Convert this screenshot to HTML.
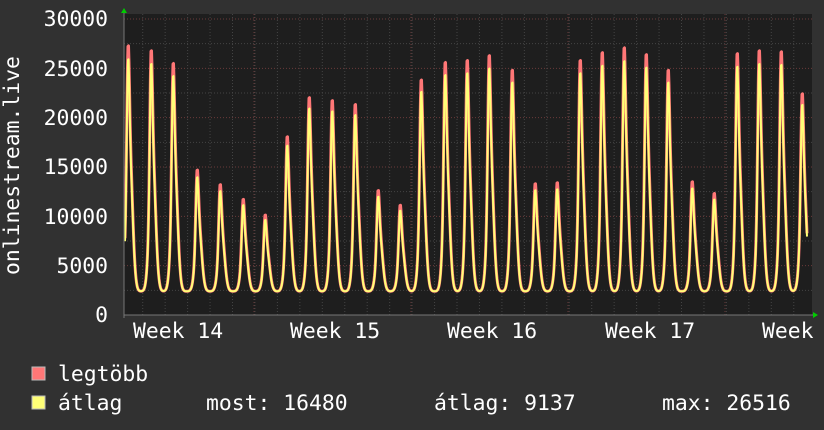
<!DOCTYPE html>
<html><head><meta charset="utf-8"><style>
html,body{margin:0;padding:0;background:#333;}
svg{display:block}
text{font-family:"DejaVu Sans Mono","Liberation Mono",monospace;fill:#fff;font-size:21.4px}
</style></head><body>
<svg id="s" width="824" height="430" xmlns="http://www.w3.org/2000/svg">
<rect width="824" height="430" fill="#313131"/>
<rect x="124" y="14" width="688" height="301" fill="#1e1e1e"/>
<g id="grid"></g>
<g id="data"></g>
<line x1="124" y1="315" x2="814" y2="315" stroke="#777" stroke-width="1"/>
<line x1="124" y1="12" x2="124" y2="318" stroke="#777" stroke-width="1"/>
<polygon points="121,13 127,13 124,8" fill="#0c0"/>
<polygon points="813,312 813,318 818,315" fill="#0c0"/>
<g text-anchor="end">
<text x="108" y="26">30000</text>
<text x="108" y="76">25000</text>
<text x="108" y="125">20000</text>
<text x="108" y="174">15000</text>
<text x="108" y="224">10000</text>
<text x="108" y="273">5000</text>
<text x="108" y="322">0</text>
</g>
<text transform="translate(19,275) rotate(-90)" x="0" y="0">onlinestream.live</text>
<text x="133" y="338">Week 14</text>
<text x="290" y="338">Week 15</text>
<text x="447" y="338">Week 16</text>
<text x="605" y="338">Week 17</text>
<text x="762" y="338">Week</text>
<rect x="32" y="367" width="13" height="13" fill="#ff7777" stroke="#bbb" stroke-width="1"/>
<rect x="32" y="396" width="13" height="13" fill="#ffff77" stroke="#bbb" stroke-width="1"/>
<text x="58" y="381">legtöbb</text>
<text x="58" y="410">átlag</text>
<text x="206" y="410">most: 16480</text>
<text x="434" y="410">átlag: 9137</text>
<text x="662" y="410">max: 26516</text>
</svg>
<script>
var NS="http://www.w3.org/2000/svg";
function el(p,t,a){var e=document.createElementNS(NS,t);for(var k in a)e.setAttribute(k,a[k]);p.appendChild(e);return e;}
var g=document.getElementById('grid');
function Y(v){return 315-v*296/30000;}
for(var v=2500;v<=30000;v+=2500){
 var maj=(v%5000==0);
 el(g,'line',{x1:124,x2:812,y1:Y(v),y2:Y(v),stroke:maj?'#6a3a3a':'#444','stroke-dasharray':'1,2','stroke-width':1});
}
for(var x=142.7;x<812;x+=22.45){
 el(g,'line',{x1:x,x2:x,y1:14,y2:315,stroke:'#444','stroke-dasharray':'1,2'});
}
[254,411,568,725].forEach(function(x){el(g,'line',{x1:x,x2:x,y1:14,y2:315,stroke:'#6a3a3a','stroke-dasharray':'1,2'});});
var peaks=[[128,27500],[151,27000],[173,25700],[197,14800],[220,13300],[243,11800],[265,10200],[287,18200],[309,22200],[332,21900],[355,21500],[378,12700],[400,11200],[421,24000],[445,25800],[467,26000],[489,26500],[512,25000],[535,13400],[557,13500],[580,26000],[602,26800],[624,27300],[646,26600],[668,25000],[692,13600],[714,12400],[737,26700],[759,27000],[781,26900],[802,22600]];
function sh(d){return 0.45*Math.exp(-Math.pow(d/1.8,2))+0.55*Math.exp(-Math.pow((d-1.5)/4.2,2));}
var mx=0;for(var d=-5;d<=5;d+=0.05)mx=Math.max(mx,sh(d));
function val(x,f){
 var v=2400;
 for(var i=0;i<peaks.length;i++){
  var p=peaks[i][0],A=(peaks[i][1]*f-2400);
  var d=x-p;
  if(Math.abs(d)>14)continue;
  v+=A*sh(d)/mx;
 }
 return Math.min(v,29500);
}
var dg=document.getElementById('data');
function path(f,col,w){
 var d="";
 for(var x=125;x<=807;x+=0.5){d+=(x==125?"M":"L")+x+","+Y(val(x,f)).toFixed(1);}
 el(dg,'path',{d:d,fill:'none',stroke:col,'stroke-width':w,'stroke-linejoin':'round'});
}
path(1,'#ff7777',3);
path(0.95,'#ffff77',2);
</script>
</body></html>
